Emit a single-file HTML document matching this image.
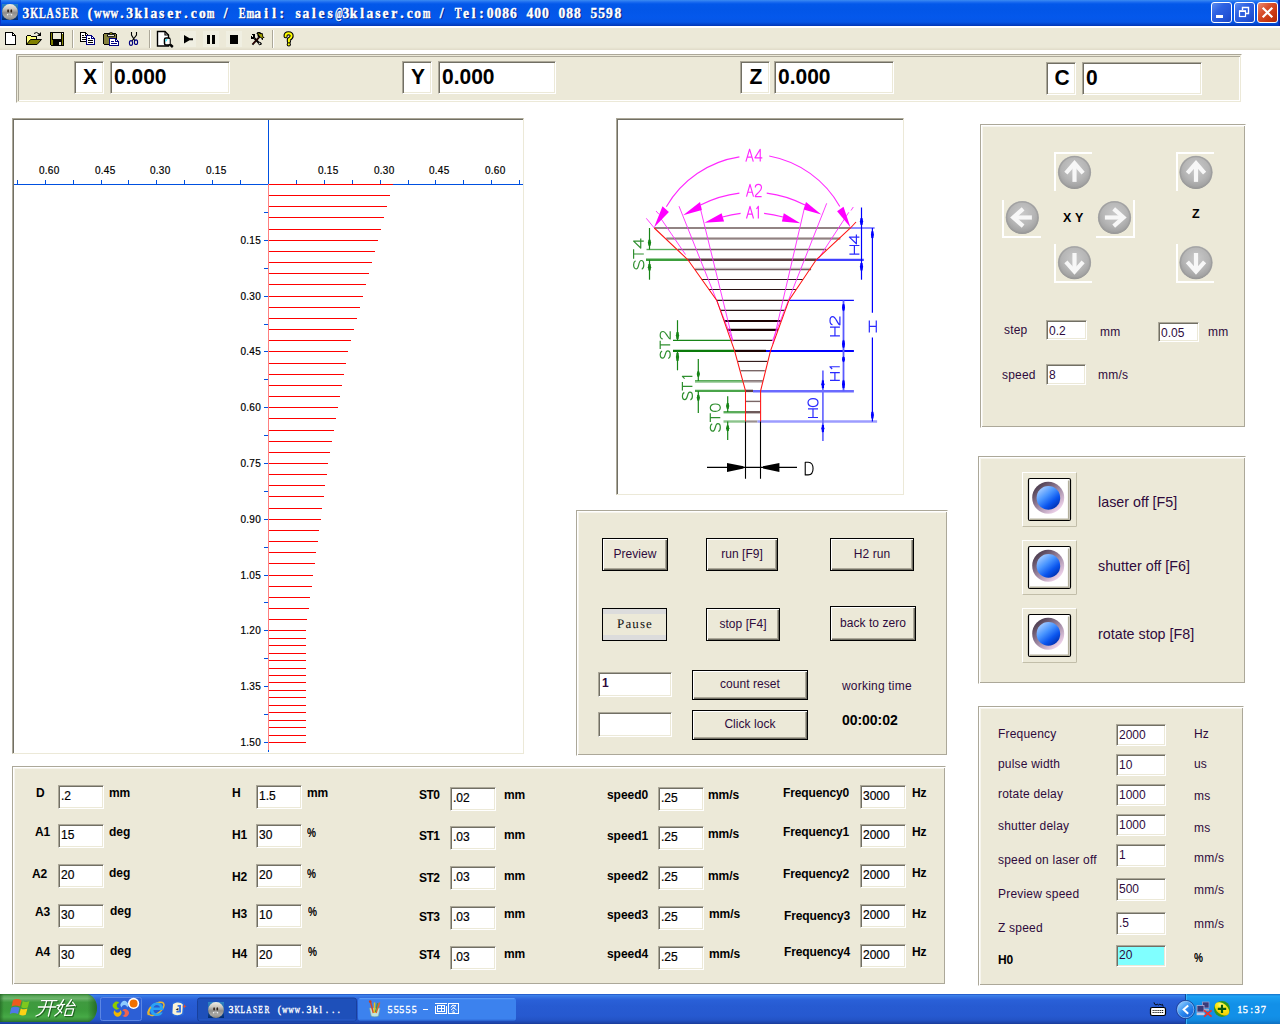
<!DOCTYPE html><html><head><meta charset="utf-8"><title>3KLASER</title><style>
*{margin:0;padding:0;box-sizing:border-box}
html,body{width:1280px;height:1024px;overflow:hidden;background:#fff}
body{position:relative;font-family:"Liberation Sans",sans-serif;font-size:12px;color:#000}
.a{position:absolute}
.t{position:absolute;white-space:nowrap;line-height:14px;height:14px;letter-spacing:0.2px;color:#2e0a3c}
.t.b{letter-spacing:-0.05px;color:#000}
.t.cl{color:#000}
.b{font-weight:bold}
.sunk{position:absolute;background:#fff;border:1px solid;border-color:#aca899 #fff #fff #aca899;box-shadow:inset 1px 1px 0 #716f64,inset -1px -1px 0 #ece9d8}
.sunk span{position:absolute;left:2px;top:3px;line-height:14px;white-space:nowrap;color:#2e0a3c}
.sunk span.k{color:#000;-webkit-text-stroke:0.2px #000}
.panel{position:absolute;background:#ece9d8;border:1px solid;border-color:#aca899 #fff #fff #aca899;box-shadow:inset 1px 1px 0 #fff,inset -1px -1px 0 #aca899,inset 2px 2px 0 #f7f5ee}
.btn{position:absolute;background:#ece9d8;border:1px solid #000;box-shadow:inset 1px 1px 0 #fff,inset -1px -1px 0 #716f64,inset -2px -2px 0 #aca899;text-align:center;white-space:nowrap;letter-spacing:0.05px;color:#2e0a3c}
svg{position:absolute;overflow:visible}
.mono{position:absolute;white-space:pre;color:#fff;font-family:'Liberation Serif',serif;transform:scaleX(0.78);transform-origin:0 50%;-webkit-text-stroke:0.35px #fff}
.mono i{display:inline-block;width:var(--cw);text-align:center;font-style:normal;transform:scaleX(1.2)}
.mono i.w{transform:scaleX(0.93)}
.mono i.m{transform:scaleX(0.82)}
.mono i.at{transform:scaleX(0.74)}
.mono i.u{transform:scaleX(0.9)}
.cl{font-size:10px;letter-spacing:0.25px;color:#000;-webkit-text-stroke:0.2px #000}
</style></head><body>
<div class="a" style="left:0;top:0;width:1280px;height:26px;background:linear-gradient(to bottom,#3b8bf2 0px,#1c6cf0 2px,#0358ea 4px,#0256e8 9px,#0458ec 17px,#0556e6 22px,#0347cf 24px,#0236b4 26px)"></div>
<div class="a" style="left:0;top:0;width:1px;height:26px;background:#0a34c6"></div><div class="a" style="left:1278px;top:0;width:2px;height:26px;background:linear-gradient(to right,#0a3cc8,#001e9c)"></div>
<svg style="left:2px;top:4px" width="16" height="16" viewBox="0 0 16 16"><defs><linearGradient id="gi" x1="0" y1="0" x2="0" y2="1"><stop offset="0" stop-color="#f2ede4"/><stop offset="0.28" stop-color="#cfcac2"/><stop offset="0.55" stop-color="#8f8d8a"/><stop offset="0.8" stop-color="#a9a7a3"/><stop offset="1" stop-color="#8a857d"/></linearGradient><linearGradient id="gib" x1="0" y1="0" x2="0" y2="1"><stop offset="0" stop-color="#2e86c4"/><stop offset="0.5" stop-color="#1a5aa8"/><stop offset="1" stop-color="#002a70"/></linearGradient></defs><rect width="16" height="16" fill="url(#gib)"/><circle cx="8" cy="8" r="7.9" fill="url(#gi)"/><ellipse cx="6.1" cy="6.9" rx="0.9" ry="1.6" fill="#33241c"/><ellipse cx="9.3" cy="6.9" rx="0.9" ry="1.6" fill="#33241c"/><rect x="4.9" y="9.9" width="1.3" height="1.5" fill="#eee"/><rect x="8.9" y="9.9" width="1.3" height="1.5" fill="#eee"/><rect x="6.2" y="9.6" width="2.7" height="1" fill="#c8c8c8"/></svg>
<div class="mono b" style="left:22px;top:4px;font-size:14.5px;height:18px;line-height:18px;--cw:10.256px;text-shadow:1.4px 1px 0 #0a2a8c;-webkit-text-stroke:0.4px #fff"><i>3</i><i class="u">K</i><i class="u">L</i><i class="u">A</i><i class="u">S</i><i class="u">E</i><i class="u">R</i><i> </i><i>(</i><i class="w">w</i><i class="w">w</i><i class="w">w</i><i>.</i><i>3</i><i>k</i><i>l</i><i>a</i><i>s</i><i>e</i><i>r</i><i>.</i><i>c</i><i>o</i><i class="m">m</i><i> </i><i>/</i><i> </i><i class="u">E</i><i class="m">m</i><i>a</i><i>i</i><i>l</i><i>:</i><i> </i><i>s</i><i>a</i><i>l</i><i>e</i><i>s</i><i class="at">@</i><i>3</i><i>k</i><i>l</i><i>a</i><i>s</i><i>e</i><i>r</i><i>.</i><i>c</i><i>o</i><i class="m">m</i><i> </i><i>/</i><i> </i><i class="u">T</i><i>e</i><i>l</i><i>:</i><i>0</i><i>0</i><i>8</i><i>6</i><i> </i><i>4</i><i>0</i><i>0</i><i> </i><i>0</i><i>8</i><i>8</i><i> </i><i>5</i><i>5</i><i>9</i><i>8</i></div>
<div class="a" style="left:1211px;top:2px;width:21px;height:21px;border:1px solid #fff;border-radius:3px;background:linear-gradient(135deg,#5d8df0 0%,#2f63e3 35%,#2455d8 70%,#1a45c4 100%)"></div>
<div class="a" style="left:1234px;top:2px;width:21px;height:21px;border:1px solid #fff;border-radius:3px;background:linear-gradient(135deg,#5d8df0 0%,#2f63e3 35%,#2455d8 70%,#1a45c4 100%)"></div>
<div class="a" style="left:1257px;top:2px;width:21px;height:21px;border:1px solid #fff;border-radius:3px;background:linear-gradient(135deg,#eb8b73 0%,#d9512f 35%,#c8370f 70%,#b02a08 100%)"></div>
<div class="a" style="left:1216px;top:15px;width:7px;height:3px;background:#fff"></div>
<svg style="left:1234px;top:2px" width="21" height="21"><path d="M8.5 8 V5.5 H14.5 V11.5 H12" fill="none" stroke="#fff" stroke-width="1.4"/><rect x="5.5" y="9" width="6" height="5.5" fill="none" stroke="#fff" stroke-width="1.2"/><rect x="5" y="8.4" width="7" height="1.6" fill="#fff"/></svg>
<svg style="left:1257px;top:2px" width="21" height="21"><path d="M5.7 5.7 L15.3 15.3 M15.3 5.7 L5.7 15.3" stroke="#fff" stroke-width="2.2"/></svg>
<div class="a" style="left:0;top:28px;width:1280px;height:22px;background:linear-gradient(to bottom,#ece9d8 0,#ece9d8 19px,#e0dbc8 22px)"></div>
<div class="a" style="left:72px;top:30px;width:1px;height:18px;background:#aca899"></div><div class="a" style="left:73px;top:30px;width:1px;height:18px;background:#fff"></div>
<div class="a" style="left:149px;top:30px;width:1px;height:18px;background:#aca899"></div><div class="a" style="left:150px;top:30px;width:1px;height:18px;background:#fff"></div>
<div class="a" style="left:272px;top:30px;width:1px;height:18px;background:#aca899"></div><div class="a" style="left:273px;top:30px;width:1px;height:18px;background:#fff"></div>
<svg style="left:0;top:0" width="320" height="52" viewBox="0 0 320 52"><path d="M5.5 32.5 H12.5 L15.5 35.5 V44.5 H5.5 Z" fill="#fff" stroke="#000" shape-rendering="crispEdges"/><path d="M12.5 32.5 V35.5 H15.5" fill="none" stroke="#000" shape-rendering="crispEdges"/><path d="M26.5 44 V36.5 L27.5 35.5 H30.5 L31.5 36.5 H36.5 V39" fill="#ffff7a" stroke="#000" shape-rendering="crispEdges"/><path d="M26.5 44.5 L30.5 39.5 H41.5 L37 44.5 Z" fill="#808000" stroke="#000"/><rect x="26" y="37" width="1" height="8" fill="#000" shape-rendering="crispEdges"/><path d="M34 33.5 Q36.5 31 39.5 34.3" fill="none" stroke="#000" stroke-width="1"/><path d="M41 32 V36 H37 Z" fill="#000"/><path d="M50.5 32.5 H63.5 V45.5 H51.5 L50.5 44.5 Z" fill="#808000" stroke="#000" shape-rendering="crispEdges"/><rect x="53" y="33" width="8" height="6" fill="#ece9d8" shape-rendering="crispEdges"/><rect x="52" y="39" width="10" height="1" fill="#000" shape-rendering="crispEdges"/><rect x="52" y="33" width="1" height="7" fill="#000" shape-rendering="crispEdges"/><rect x="61" y="33" width="1" height="7" fill="#000" shape-rendering="crispEdges"/><rect x="53" y="40" width="9" height="5" fill="#000" shape-rendering="crispEdges"/><rect x="59" y="42" width="2" height="3" fill="#ece9d8" shape-rendering="crispEdges"/><rect x="62" y="33" width="1" height="1" fill="#fff" shape-rendering="crispEdges"/><path d="M80.5 32.5 H85.5 L88.5 35.5 V41.5 H80.5 Z" fill="#fff" stroke="#000" shape-rendering="crispEdges"/><path d="M85.5 32.5 V35.5 H88.5" fill="none" stroke="#000" shape-rendering="crispEdges"/><path d="M82 35.5 H84 M82 37.5 H86 M82 39.5 H86" stroke="#000" shape-rendering="crispEdges"/><path d="M86.5 35.5 H91.5 L94.5 38.5 V44.5 H86.5 Z" fill="#fff" stroke="#000080" shape-rendering="crispEdges"/><path d="M91.5 35.5 V38.5 H94.5" fill="none" stroke="#000080" shape-rendering="crispEdges"/><path d="M88 38.5 H90 M88 40.5 H93 M88 42.5 H93" stroke="#000" shape-rendering="crispEdges"/><path d="M104.5 33.5 H115.5 L116.5 34.5 V43.5 L115.5 44.5 H104.5 L103.5 43.5 V34.5 Z" fill="#85813d" stroke="#000" shape-rendering="crispEdges"/><path d="M108.4 34.2 L109.8 32.3 H112.2 L113.6 34.2 Z" fill="#000"/><path d="M109.5 34.3 L111 32.9 L112.5 34.3 Z" fill="#ffff00"/><rect x="107.5" y="34.3" width="7" height="2.4" rx="0.6" fill="#ece9d8" stroke="#000" stroke-width="1"/><path d="M109.5 38.5 H115.5 L118.5 41.5 V45.5 H109.5 Z" fill="#fff" stroke="#000080" shape-rendering="crispEdges"/><path d="M115.5 38.5 V41.5 H118.5" fill="none" stroke="#000080" shape-rendering="crispEdges"/><path d="M111 41.5 H114 M111 43.5 H117" stroke="#000080" shape-rendering="crispEdges"/><path d="M131.5 32 V35 L135 41 M136.5 32 V35 L132 41" fill="none" stroke="#000" stroke-width="1.1"/><ellipse cx="131" cy="43" rx="1.6" ry="2.4" fill="none" stroke="#000080" stroke-width="1.1"/><ellipse cx="136" cy="42.2" rx="1.6" ry="2.3" fill="none" stroke="#000080" stroke-width="1.1"/><path d="M157.5 31.5 H165 L168.5 35 V46 H157.5 Z" fill="#fff" stroke="#000" stroke-width="1.4"/><path d="M165 31.5 V35 H168.5" fill="none" stroke="#000" stroke-width="1.2"/><rect x="164.5" y="38" width="5.5" height="7" rx="1.5" fill="#fff" stroke="#000" stroke-width="1.5"/><path d="M165.6 39.2 H167.6 L165.6 42.2 Z" fill="#00e1ff"/><rect x="168.6" y="39" width="1" height="5" fill="#fff"/><path d="M170 44.5 L172.8 47" stroke="#000" stroke-width="2.4"/><rect x="180" y="31" width="16" height="16" fill="#f0efe2" shape-rendering="crispEdges"/><rect x="203" y="31" width="16" height="16" fill="#f0efe2" shape-rendering="crispEdges"/><rect x="226" y="31" width="16" height="16" fill="#f0efe2" shape-rendering="crispEdges"/><path d="M184 35 L184 43.4 L189.5 40.2 H193 V38.2 H189.5 Z" fill="#000"/><rect x="207" y="35" width="3" height="9" fill="#000" shape-rendering="crispEdges"/><rect x="212" y="35" width="3" height="9" fill="#000" shape-rendering="crispEdges"/><rect x="230" y="35" width="8" height="9" fill="#000" shape-rendering="crispEdges"/><rect x="252" y="34" width="1" height="1" fill="#000" shape-rendering="crispEdges"/><rect x="253" y="34" width="1" height="1" fill="#000" shape-rendering="crispEdges"/><rect x="254" y="34" width="1" height="1" fill="#000" shape-rendering="crispEdges"/><rect x="253" y="35" width="1" height="1" fill="#000" shape-rendering="crispEdges"/><rect x="254" y="35" width="1" height="1" fill="#000" shape-rendering="crispEdges"/><rect x="251" y="36" width="1" height="1" fill="#000" shape-rendering="crispEdges"/><rect x="253" y="36" width="1" height="1" fill="#000" shape-rendering="crispEdges"/><rect x="254" y="36" width="1" height="1" fill="#000" shape-rendering="crispEdges"/><rect x="251" y="37" width="1" height="1" fill="#000" shape-rendering="crispEdges"/><rect x="252" y="37" width="1" height="1" fill="#000" shape-rendering="crispEdges"/><rect x="253" y="37" width="1" height="1" fill="#000" shape-rendering="crispEdges"/><rect x="254" y="37" width="1" height="1" fill="#000" shape-rendering="crispEdges"/><rect x="251" y="38" width="1" height="1" fill="#000" shape-rendering="crispEdges"/><rect x="252" y="38" width="1" height="1" fill="#000" shape-rendering="crispEdges"/><rect x="253" y="38" width="1" height="1" fill="#000" shape-rendering="crispEdges"/><path d="M254.4 38.2 L259 43" stroke="#000" stroke-width="2.1"/><circle cx="259.8" cy="43.5" r="1.25" fill="#ddd" stroke="#000" stroke-width="1"/><path d="M260.6 44.9 L261.2 43.2" stroke="#000" stroke-width="1.2"/><path d="M258.8 37.6 L252.4 44.6" stroke="#000" stroke-width="1.9"/><path d="M258.9 37.3 L252.8 44" stroke="#b00000" stroke-width="0.8" stroke-dasharray="0.8 0.8"/><path d="M256.3 33.5 L257.6 32.1 L260.3 32 L260.8 33 L262.7 33.2 L263.3 36.7 L264.5 37.2 L264.1 38.1 L263 37.9 L263 39.7 L262 39.9 L261 37.7 L258.9 37.9 L257.6 36.3 L257.3 34.3 Z" fill="#000"/><path d="M258.1 33.4 L259 32.9 L259.7 34 L262.1 34.2 L262.5 37 L263.3 37.6 L262.4 38 L260.5 36.9 L259.3 35.4 Z" fill="#a19f00"/><path d="M285.6 36.2 Q285.4 33.3 288.5 33.3 Q291.7 33.3 291.6 36 Q291.6 37.8 288.9 39.4 V41.4" fill="none" stroke="#000" stroke-width="4.2" stroke-linecap="round"/><circle cx="288.8" cy="44.4" r="2.1" fill="#000"/><path d="M285.6 36.2 Q285.4 33.3 288.5 33.3 Q291.7 33.3 291.6 36 Q291.6 37.8 288.9 39.4 V41.4" fill="none" stroke="#ffff00" stroke-width="2" stroke-linecap="round"/><circle cx="288.8" cy="44.4" r="1.1" fill="#ffff00"/></svg>
<div class="a" style="left:16px;top:54px;width:1226px;height:49px;background:#ece9d8;border:1px solid;border-color:#aca899 #fff #fff #aca899;box-shadow:inset 0 0 0 1px #ece9d8, inset 2px 2px 0 #aca899, inset -2px -2px 0 #fff"></div>
<div class="sunk" style="left:74px;top:61px;width:30px;height:33px"></div>
<div class="a b" style="left:75px;top:60px;width:30px;height:33px;line-height:31px;text-align:center;font-size:21px;transform:scaleY(1.08)">X</div>
<div class="sunk" style="left:110px;top:61px;width:120px;height:33px"></div>
<div class="a b" style="left:114px;top:60px;height:33px;line-height:31px;font-size:21px;transform:scaleY(1.08);transform-origin:0 50%">0.000</div>
<div class="sunk" style="left:402px;top:61px;width:30px;height:33px"></div>
<div class="a b" style="left:403px;top:60px;width:30px;height:33px;line-height:31px;text-align:center;font-size:21px;transform:scaleY(1.08)">Y</div>
<div class="sunk" style="left:438px;top:61px;width:118px;height:33px"></div>
<div class="a b" style="left:442px;top:60px;height:33px;line-height:31px;font-size:21px;transform:scaleY(1.08);transform-origin:0 50%">0.000</div>
<div class="sunk" style="left:740px;top:61px;width:30px;height:33px"></div>
<div class="a b" style="left:741px;top:60px;width:30px;height:33px;line-height:31px;text-align:center;font-size:21px;transform:scaleY(1.08)">Z</div>
<div class="sunk" style="left:774px;top:61px;width:120px;height:33px"></div>
<div class="a b" style="left:778px;top:60px;height:33px;line-height:31px;font-size:21px;transform:scaleY(1.08);transform-origin:0 50%">0.000</div>
<div class="sunk" style="left:1046px;top:62px;width:30px;height:33px"></div>
<div class="a b" style="left:1047px;top:61px;width:30px;height:33px;line-height:31px;text-align:center;font-size:21px;transform:scaleY(1.08)">C</div>
<div class="sunk" style="left:1082px;top:62px;width:120px;height:33px"></div>
<div class="a b" style="left:1086px;top:61px;height:33px;line-height:31px;font-size:21px;transform:scaleY(1.08);transform-origin:0 50%">0</div>
<div class="a" style="left:12px;top:118px;width:512px;height:636px;background:#fff;border:1px solid;border-color:#aca899 #ece9d8 #ece9d8 #aca899;box-shadow:inset 1px 1px 0 #716f64"></div>
<svg style="left:0;top:0" width="540" height="760" viewBox="0 0 540 760"><rect x="14" y="184" width="509" height="1" fill="#0050e0" shape-rendering="crispEdges"/><rect x="268" y="120" width="1" height="64" fill="#0050e0" shape-rendering="crispEdges"/><rect x="268" y="184" width="1" height="567" fill="#ff8080" shape-rendering="crispEdges"/><rect x="268" y="750" width="1" height="2" fill="#0050e0" shape-rendering="crispEdges"/><rect x="17" y="180" width="1" height="4" fill="#0050e0" shape-rendering="crispEdges"/><rect x="45" y="180" width="1" height="4" fill="#0050e0" shape-rendering="crispEdges"/><rect x="73" y="180" width="1" height="4" fill="#0050e0" shape-rendering="crispEdges"/><rect x="101" y="180" width="1" height="4" fill="#0050e0" shape-rendering="crispEdges"/><rect x="128" y="180" width="1" height="4" fill="#0050e0" shape-rendering="crispEdges"/><rect x="156" y="180" width="1" height="4" fill="#0050e0" shape-rendering="crispEdges"/><rect x="184" y="180" width="1" height="4" fill="#0050e0" shape-rendering="crispEdges"/><rect x="212" y="180" width="1" height="4" fill="#0050e0" shape-rendering="crispEdges"/><rect x="240" y="180" width="1" height="4" fill="#0050e0" shape-rendering="crispEdges"/><rect x="296" y="180" width="1" height="4" fill="#0050e0" shape-rendering="crispEdges"/><rect x="324" y="180" width="1" height="4" fill="#0050e0" shape-rendering="crispEdges"/><rect x="352" y="180" width="1" height="4" fill="#0050e0" shape-rendering="crispEdges"/><rect x="380" y="180" width="1" height="4" fill="#0050e0" shape-rendering="crispEdges"/><rect x="408" y="180" width="1" height="4" fill="#0050e0" shape-rendering="crispEdges"/><rect x="435" y="180" width="1" height="4" fill="#0050e0" shape-rendering="crispEdges"/><rect x="463" y="180" width="1" height="4" fill="#0050e0" shape-rendering="crispEdges"/><rect x="491" y="180" width="1" height="4" fill="#0050e0" shape-rendering="crispEdges"/><rect x="519" y="180" width="1" height="4" fill="#0050e0" shape-rendering="crispEdges"/><rect x="264" y="212" width="4" height="1" fill="#0050e0" shape-rendering="crispEdges"/><rect x="264" y="240" width="4" height="1" fill="#0050e0" shape-rendering="crispEdges"/><rect x="264" y="268" width="4" height="1" fill="#0050e0" shape-rendering="crispEdges"/><rect x="264" y="296" width="4" height="1" fill="#0050e0" shape-rendering="crispEdges"/><rect x="264" y="324" width="4" height="1" fill="#0050e0" shape-rendering="crispEdges"/><rect x="264" y="351" width="4" height="1" fill="#0050e0" shape-rendering="crispEdges"/><rect x="264" y="379" width="4" height="1" fill="#0050e0" shape-rendering="crispEdges"/><rect x="264" y="407" width="4" height="1" fill="#0050e0" shape-rendering="crispEdges"/><rect x="264" y="435" width="4" height="1" fill="#0050e0" shape-rendering="crispEdges"/><rect x="264" y="463" width="4" height="1" fill="#0050e0" shape-rendering="crispEdges"/><rect x="264" y="491" width="4" height="1" fill="#0050e0" shape-rendering="crispEdges"/><rect x="264" y="519" width="4" height="1" fill="#0050e0" shape-rendering="crispEdges"/><rect x="264" y="547" width="4" height="1" fill="#0050e0" shape-rendering="crispEdges"/><rect x="264" y="575" width="4" height="1" fill="#0050e0" shape-rendering="crispEdges"/><rect x="264" y="602" width="4" height="1" fill="#0050e0" shape-rendering="crispEdges"/><rect x="264" y="630" width="4" height="1" fill="#0050e0" shape-rendering="crispEdges"/><rect x="264" y="658" width="4" height="1" fill="#0050e0" shape-rendering="crispEdges"/><rect x="264" y="686" width="4" height="1" fill="#0050e0" shape-rendering="crispEdges"/><rect x="264" y="714" width="4" height="1" fill="#0050e0" shape-rendering="crispEdges"/><rect x="264" y="742" width="4" height="1" fill="#0050e0" shape-rendering="crispEdges"/><rect x="269" y="184" width="124" height="1" fill="#ff0000" shape-rendering="crispEdges"/><rect x="269" y="195" width="121" height="1" fill="#ff0000" shape-rendering="crispEdges"/><rect x="269" y="206" width="118" height="1" fill="#ff0000" shape-rendering="crispEdges"/><rect x="269" y="217" width="115" height="1" fill="#ff0000" shape-rendering="crispEdges"/><rect x="269" y="229" width="112" height="1" fill="#ff0000" shape-rendering="crispEdges"/><rect x="269" y="240" width="109" height="1" fill="#ff0000" shape-rendering="crispEdges"/><rect x="269" y="251" width="106" height="1" fill="#ff0000" shape-rendering="crispEdges"/><rect x="269" y="262" width="103" height="1" fill="#ff0000" shape-rendering="crispEdges"/><rect x="269" y="273" width="100" height="1" fill="#ff0000" shape-rendering="crispEdges"/><rect x="269" y="284" width="97" height="1" fill="#ff0000" shape-rendering="crispEdges"/><rect x="269" y="296" width="94" height="1" fill="#ff0000" shape-rendering="crispEdges"/><rect x="269" y="307" width="91" height="1" fill="#ff0000" shape-rendering="crispEdges"/><rect x="269" y="318" width="88" height="1" fill="#ff0000" shape-rendering="crispEdges"/><rect x="269" y="329" width="85" height="1" fill="#ff0000" shape-rendering="crispEdges"/><rect x="269" y="340" width="82" height="1" fill="#ff0000" shape-rendering="crispEdges"/><rect x="269" y="351" width="79" height="1" fill="#ff0000" shape-rendering="crispEdges"/><rect x="269" y="363" width="77" height="1" fill="#ff0000" shape-rendering="crispEdges"/><rect x="269" y="374" width="75" height="1" fill="#ff0000" shape-rendering="crispEdges"/><rect x="269" y="385" width="73" height="1" fill="#ff0000" shape-rendering="crispEdges"/><rect x="269" y="396" width="71" height="1" fill="#ff0000" shape-rendering="crispEdges"/><rect x="269" y="407" width="69" height="1" fill="#ff0000" shape-rendering="crispEdges"/><rect x="269" y="418" width="67" height="1" fill="#ff0000" shape-rendering="crispEdges"/><rect x="269" y="430" width="65" height="1" fill="#ff0000" shape-rendering="crispEdges"/><rect x="269" y="441" width="63" height="1" fill="#ff0000" shape-rendering="crispEdges"/><rect x="269" y="452" width="61" height="1" fill="#ff0000" shape-rendering="crispEdges"/><rect x="269" y="463" width="59" height="1" fill="#ff0000" shape-rendering="crispEdges"/><rect x="269" y="474" width="58" height="1" fill="#ff0000" shape-rendering="crispEdges"/><rect x="269" y="485" width="56" height="1" fill="#ff0000" shape-rendering="crispEdges"/><rect x="269" y="496" width="55" height="1" fill="#ff0000" shape-rendering="crispEdges"/><rect x="269" y="508" width="53" height="1" fill="#ff0000" shape-rendering="crispEdges"/><rect x="269" y="519" width="52" height="1" fill="#ff0000" shape-rendering="crispEdges"/><rect x="269" y="530" width="50" height="1" fill="#ff0000" shape-rendering="crispEdges"/><rect x="269" y="541" width="49" height="1" fill="#ff0000" shape-rendering="crispEdges"/><rect x="269" y="552" width="47" height="1" fill="#ff0000" shape-rendering="crispEdges"/><rect x="269" y="563" width="46" height="1" fill="#ff0000" shape-rendering="crispEdges"/><rect x="269" y="575" width="44" height="1" fill="#ff0000" shape-rendering="crispEdges"/><rect x="269" y="586" width="43" height="1" fill="#ff0000" shape-rendering="crispEdges"/><rect x="269" y="597" width="41" height="1" fill="#ff0000" shape-rendering="crispEdges"/><rect x="269" y="608" width="40" height="1" fill="#ff0000" shape-rendering="crispEdges"/><rect x="269" y="619" width="38" height="1" fill="#ff0000" shape-rendering="crispEdges"/><rect x="269" y="630" width="37" height="1" fill="#ff0000" shape-rendering="crispEdges"/><rect x="269" y="638" width="37" height="1" fill="#ff0000" shape-rendering="crispEdges"/><rect x="269" y="645" width="37" height="1" fill="#ff0000" shape-rendering="crispEdges"/><rect x="269" y="653" width="37" height="1" fill="#ff0000" shape-rendering="crispEdges"/><rect x="269" y="660" width="37" height="1" fill="#ff0000" shape-rendering="crispEdges"/><rect x="269" y="668" width="37" height="1" fill="#ff0000" shape-rendering="crispEdges"/><rect x="269" y="675" width="37" height="1" fill="#ff0000" shape-rendering="crispEdges"/><rect x="269" y="682" width="37" height="1" fill="#ff0000" shape-rendering="crispEdges"/><rect x="269" y="690" width="37" height="1" fill="#ff0000" shape-rendering="crispEdges"/><rect x="269" y="697" width="37" height="1" fill="#ff0000" shape-rendering="crispEdges"/><rect x="269" y="705" width="37" height="1" fill="#ff0000" shape-rendering="crispEdges"/><rect x="269" y="712" width="37" height="1" fill="#ff0000" shape-rendering="crispEdges"/><rect x="269" y="720" width="37" height="1" fill="#ff0000" shape-rendering="crispEdges"/><rect x="269" y="727" width="37" height="1" fill="#ff0000" shape-rendering="crispEdges"/><rect x="269" y="735" width="37" height="1" fill="#ff0000" shape-rendering="crispEdges"/><rect x="269" y="742" width="37" height="1" fill="#ff0000" shape-rendering="crispEdges"/></svg>
<div class="t cl" style="left:206px;top:164px">0.15</div>
<div class="t cl" style="left:318px;top:164px">0.15</div>
<div class="t cl" style="left:150px;top:164px">0.30</div>
<div class="t cl" style="left:374px;top:164px">0.30</div>
<div class="t cl" style="left:95px;top:164px">0.45</div>
<div class="t cl" style="left:429px;top:164px">0.45</div>
<div class="t cl" style="left:39px;top:164px">0.60</div>
<div class="t cl" style="left:485px;top:164px">0.60</div>
<div class="t cl" style="left:240px;top:234px;width:21px;text-align:right">0.15</div>
<div class="t cl" style="left:240px;top:290px;width:21px;text-align:right">0.30</div>
<div class="t cl" style="left:240px;top:345px;width:21px;text-align:right">0.45</div>
<div class="t cl" style="left:240px;top:401px;width:21px;text-align:right">0.60</div>
<div class="t cl" style="left:240px;top:457px;width:21px;text-align:right">0.75</div>
<div class="t cl" style="left:240px;top:513px;width:21px;text-align:right">0.90</div>
<div class="t cl" style="left:240px;top:569px;width:21px;text-align:right">1.05</div>
<div class="t cl" style="left:240px;top:624px;width:21px;text-align:right">1.20</div>
<div class="t cl" style="left:240px;top:680px;width:21px;text-align:right">1.35</div>
<div class="t cl" style="left:240px;top:736px;width:21px;text-align:right">1.50</div>
<div class="a" style="left:616px;top:118px;width:288px;height:377px;background:#fff;border:1px solid;border-color:#aca899 #ece9d8 #ece9d8 #aca899;box-shadow:inset 1px 1px 0 #716f64"></div>
<svg style="left:0;top:0" width="920" height="500" viewBox="0 0 920 500"><line x1="654.3" y1="228.0" x2="850.5" y2="228.0" stroke="#6e5a5a" stroke-width="1.5"/><line x1="666.3" y1="237.7" x2="840.3" y2="237.7" stroke="#c4baba" stroke-width="1.3"/><line x1="666.3" y1="238.9" x2="840.3" y2="238.9" stroke="#705c5c" stroke-width="1.3"/><line x1="677.8" y1="249.5" x2="826.3" y2="249.5" stroke="#6e5a5a" stroke-width="1.5"/><line x1="687.9" y1="259.8" x2="816.2" y2="259.8" stroke="#5a4040" stroke-width="2.4"/><line x1="694.9" y1="268.5" x2="811.1" y2="268.5" stroke="#c4baba" stroke-width="1.3"/><line x1="694.9" y1="269.7" x2="811.1" y2="269.7" stroke="#705c5c" stroke-width="1.3"/><line x1="701.5" y1="279.5" x2="802.9" y2="279.5" stroke="#2a1414" stroke-width="1.1"/><line x1="708.9" y1="289.5" x2="795.9" y2="289.5" stroke="#2a1414" stroke-width="1.1"/><line x1="716.8" y1="300.4" x2="788.9" y2="300.4" stroke="#2a1414" stroke-width="1.1"/><line x1="720.0" y1="310.4" x2="784.7" y2="310.4" stroke="#2a1414" stroke-width="1.1"/><line x1="724.1" y1="321.0" x2="780.9" y2="321.0" stroke="#1c0404" stroke-width="2.2"/><line x1="727.3" y1="329.9" x2="777.8" y2="329.9" stroke="#1c0404" stroke-width="2.2"/><line x1="731.7" y1="340.4" x2="772.6" y2="340.4" stroke="#2a1414" stroke-width="1.1"/><line x1="734.6" y1="350.9" x2="766.0" y2="350.9" stroke="#1c0404" stroke-width="2.2"/><line x1="738.1" y1="361.4" x2="767.3" y2="361.4" stroke="#2a1414" stroke-width="1.1"/><line x1="740.6" y1="370.7" x2="764.8" y2="370.7" stroke="#7a6666" stroke-width="1.4"/><line x1="743.2" y1="382.0" x2="762.9" y2="382.0" stroke="#b8aeae" stroke-width="1.4"/><line x1="743.2" y1="380.8" x2="762.9" y2="380.8" stroke="#7a6868" stroke-width="1.4"/><line x1="745.5" y1="390.9" x2="753.0" y2="390.9" stroke="#5a4040" stroke-width="2.4"/><line x1="745.5" y1="401.4" x2="760.5" y2="401.4" stroke="#7a6666" stroke-width="1.4"/><line x1="745.5" y1="412.2" x2="760.5" y2="412.2" stroke="#6e5a5a" stroke-width="2.4"/><line x1="745.5" y1="421.5" x2="757.5" y2="421.5" stroke="#9a9090" stroke-width="2.2"/><line x1="850" y1="228" x2="874.6" y2="228" stroke="#5a5aff" stroke-width="1.4"/><line x1="816" y1="259.8" x2="863.8" y2="259.8" stroke="#4040ff" stroke-width="2.2"/><line x1="788.9" y1="300.4" x2="853.9" y2="300.4" stroke="#0a0aff" stroke-width="1.1"/><line x1="766" y1="351" x2="853.9" y2="351" stroke="#0000ff" stroke-width="2.2"/><line x1="753" y1="391.2" x2="853.9" y2="391.2" stroke="#6a6aff" stroke-width="2.4"/><line x1="757.5" y1="421.5" x2="877.1" y2="421.5" stroke="#9c9cff" stroke-width="2.4"/><line x1="646.5" y1="249.5" x2="677.5" y2="249.5" stroke="#58ac58" stroke-width="1.4"/><line x1="646" y1="259.8" x2="688" y2="259.8" stroke="#3c9e3c" stroke-width="2.4"/><line x1="673" y1="340.4" x2="732" y2="340.4" stroke="#178517" stroke-width="1.1"/><line x1="673" y1="350.9" x2="734.6" y2="350.9" stroke="#0a7a0a" stroke-width="2.2"/><line x1="695" y1="381.4" x2="743.2" y2="381.4" stroke="#8cc48c" stroke-width="2.6"/><line x1="695" y1="380.6" x2="743.2" y2="380.6" stroke="#5aac5a" stroke-width="1.2"/><line x1="695" y1="390.9" x2="745.5" y2="390.9" stroke="#4aa44a" stroke-width="2.4"/><line x1="723.5" y1="412.2" x2="745.5" y2="412.2" stroke="#5aac5a" stroke-width="2.4"/><line x1="723.5" y1="421.5" x2="745.5" y2="421.5" stroke="#8cc48c" stroke-width="2.4"/><line x1="646.3" y1="218.3" x2="654.3" y2="228.0" stroke="#ff28ff" stroke-width="0.9"/><line x1="656.0" y1="211.0" x2="659.0" y2="214.3" stroke="#ff28ff" stroke-width="0.9"/><line x1="659.5" y1="216.5" x2="685.5" y2="254.6" stroke="#ff28ff" stroke-width="0.9"/><line x1="848.8" y1="212.3" x2="818.7" y2="258.3" stroke="#ff28ff" stroke-width="0.9"/><line x1="853.3" y1="207.0" x2="851.0" y2="210.5" stroke="#ff28ff" stroke-width="0.9"/><line x1="679.0" y1="206.2" x2="732.6" y2="340.4" stroke="#ff28ff" stroke-width="0.9"/><line x1="826.7" y1="203.3" x2="772.4" y2="341.0" stroke="#ff28ff" stroke-width="0.9"/><line x1="700.6" y1="209.4" x2="733.0" y2="341.5" stroke="#ff28ff" stroke-width="0.9"/><line x1="804.1" y1="209.4" x2="772.8" y2="344.0" stroke="#ff28ff" stroke-width="0.9"/><polyline points="654.3,228 687.9,259.8 716.8,300.4 734.6,350.9 745.5,390.9 745.5,421.5" fill="none" stroke="#ff1414" stroke-width="1.05"/><polyline points="856,222 850.5,228 816.2,259.8 788.9,300.4 770.5,350.9 760.6,390.9 760.6,421.5" fill="none" stroke="#ff1414" stroke-width="1.05"/><path d="M745.5,421.5 V478.8 M760.5,421.5 V478.8 M707,467.4 H797" stroke="#000" stroke-width="1.1" fill="none"/><path d="M727,463 V472 L743.5,468.5 V466.3 Z M779.4,463 V472 L763,468.5 V466.3 Z" fill="#000"/><path d="M0.5,0 V10 H4 C7.8,10 9.6,8 9.6,5 C9.6,2 7.8,0 4,0 Z" transform="translate(804.80,462.30) scale(0.860,1.260)" fill="none" stroke="#000" stroke-width="1.10" vector-effect="non-scaling-stroke" stroke-linejoin="round"/><path d="M739.4,156.9 A102.5,102.5 0 0 0 666.3,206.8" fill="none" stroke="#ff28ff" stroke-width="1.1"/><path d="M769.2,156 A102.5,102.5 0 0 1 839.8,206.5" fill="none" stroke="#ff28ff" stroke-width="1.1"/><path d="M739.4,193.1 A116,116 0 0 0 700.5,205" fill="none" stroke="#ff28ff" stroke-width="1.1"/><path d="M766.7,193.1 A116,116 0 0 1 805,205" fill="none" stroke="#ff28ff" stroke-width="1.1"/><path d="M740.6,213.4 A118,118 0 0 0 722.5,217" fill="none" stroke="#ff28ff" stroke-width="1.1"/><path d="M764.1,213.4 A118,118 0 0 1 783,217" fill="none" stroke="#ff28ff" stroke-width="1.1"/><path d="M654.0,227.5 L662.5,206.2 L668.9,211.9 Z" fill="#ff00ff"/><path d="M850.5,227.5 L837.1,211.3 L843.5,206.8 Z" fill="#ff00ff"/><path d="M683.1,215.3 L700.0,202.1 L701.9,210.0 Z" fill="#ff00ff"/><path d="M821.3,214.4 L806.0,202.1 L803.5,209.4 Z" fill="#ff00ff"/><path d="M704.4,222.7 L721.6,213.2 L724.1,221.4 Z" fill="#ff00ff"/><path d="M800.3,223.3 L783.8,213.2 L781.9,221.4 Z" fill="#ff00ff"/><path d="M0,10 L5,0 L10,10 M1.9,6.4 H8.1" transform="translate(745.90,149.20) scale(0.740,1.240)" fill="none" stroke="#ff28ff" stroke-width="1.15" vector-effect="non-scaling-stroke" stroke-linejoin="round"/><path d="M7.2,10 V0 L0,7 H10" transform="translate(754.90,149.20) scale(0.740,1.240)" fill="none" stroke="#ff28ff" stroke-width="1.15" vector-effect="non-scaling-stroke" stroke-linejoin="round"/><path d="M0,10 L5,0 L10,10 M1.9,6.4 H8.1" transform="translate(746.50,184.40) scale(0.700,1.220)" fill="none" stroke="#ff28ff" stroke-width="1.15" vector-effect="non-scaling-stroke" stroke-linejoin="round"/><path d="M0.6,2.6 C0.6,1 2.3,0 5,0 C7.6,0 9.4,1 9.4,2.8 C9.4,4.6 7.2,5.6 4.5,7 C2.2,8.2 0.5,9 0.5,10 H9.6" transform="translate(754.90,184.40) scale(0.700,1.220)" fill="none" stroke="#ff28ff" stroke-width="1.15" vector-effect="non-scaling-stroke" stroke-linejoin="round"/><path d="M0,10 L5,0 L10,10 M1.9,6.4 H8.1" transform="translate(746.50,206.30) scale(0.700,1.220)" fill="none" stroke="#ff28ff" stroke-width="1.15" vector-effect="non-scaling-stroke" stroke-linejoin="round"/><path d="M2.5,2.2 L5.2,0 V10" transform="translate(754.70,206.30) scale(0.700,1.220)" fill="none" stroke="#ff28ff" stroke-width="1.15" vector-effect="non-scaling-stroke" stroke-linejoin="round"/><line x1="649.5" y1="228.0" x2="649.5" y2="249.5" stroke="#178517" stroke-width="1.2"/><line x1="649.5" y1="259.8" x2="649.5" y2="279.7" stroke="#178517" stroke-width="1.2"/><path d="M649.5,238.7 L651.2,242.7 L649.5,246.7 L647.8,242.7 Z" fill="#178517"/><line x1="649.5" y1="239.7" x2="649.5" y2="245.7" stroke="#178517" stroke-width="2.2"/><path d="M649.5,263.0 L651.2,267.2 L649.5,271.5 L647.8,267.2 Z" fill="#178517"/><line x1="649.5" y1="264.0" x2="649.5" y2="270.5" stroke="#178517" stroke-width="2.2"/><line x1="677.5" y1="320.2" x2="677.5" y2="340.4" stroke="#178517" stroke-width="1.2"/><line x1="677.5" y1="350.9" x2="677.5" y2="370.3" stroke="#178517" stroke-width="1.2"/><path d="M677.5,331.1 L679.2,335.6 L677.5,340.0 L675.8,335.6 Z" fill="#178517"/><line x1="677.5" y1="332.1" x2="677.5" y2="339.0" stroke="#178517" stroke-width="2.2"/><path d="M677.5,351.9 L679.2,356.9 L677.5,361.9 L675.8,356.9 Z" fill="#178517"/><line x1="677.5" y1="352.9" x2="677.5" y2="360.9" stroke="#178517" stroke-width="2.2"/><line x1="698.3" y1="358.9" x2="698.3" y2="381.0" stroke="#178517" stroke-width="1.2"/><line x1="698.3" y1="390.9" x2="698.3" y2="412.9" stroke="#178517" stroke-width="1.2"/><path d="M698.3,370.5 L700.0,374.0 L698.3,377.5 L696.6,374.0 Z" fill="#178517"/><line x1="698.3" y1="371.5" x2="698.3" y2="376.5" stroke="#178517" stroke-width="2.2"/><path d="M698.3,393.9 L700.0,397.7 L698.3,401.5 L696.6,397.7 Z" fill="#178517"/><line x1="698.3" y1="394.9" x2="698.3" y2="400.5" stroke="#178517" stroke-width="2.2"/><line x1="727.7" y1="396.3" x2="727.7" y2="412.0" stroke="#178517" stroke-width="1.2"/><line x1="727.7" y1="421.5" x2="727.7" y2="440.0" stroke="#178517" stroke-width="1.2"/><path d="M727.7,402.2 L729.4,405.9 L727.7,409.7 L726.0,405.9 Z" fill="#178517"/><line x1="727.7" y1="403.2" x2="727.7" y2="408.7" stroke="#178517" stroke-width="2.2"/><path d="M727.7,424.5 L729.4,428.2 L727.7,432.0 L726.0,428.2 Z" fill="#178517"/><line x1="727.7" y1="425.5" x2="727.7" y2="431.0" stroke="#178517" stroke-width="2.2"/><path d="M9.3,1.9 C8.6,0.7 7,0 5,0 C2.4,0 0.7,1 0.7,2.5 C0.7,4 2.6,4.5 5,5 C7.6,5.5 9.5,6 9.5,7.5 C9.5,9 7.6,10 5,10 C2.6,10 0.9,9.3 0.4,8" transform="matrix(0,-0.960,1.020,0,633.60,269.60)" fill="none" stroke="#2f8f2f" stroke-width="1.20" vector-effect="non-scaling-stroke" stroke-linejoin="round"/><path d="M0,0 H10 M5,0 V10" transform="matrix(0,-0.960,1.020,0,633.60,258.80)" fill="none" stroke="#2f8f2f" stroke-width="1.20" vector-effect="non-scaling-stroke" stroke-linejoin="round"/><path d="M7.2,10 V0 L0,7 H10" transform="matrix(0,-0.960,1.020,0,633.60,248.00)" fill="none" stroke="#2f8f2f" stroke-width="1.20" vector-effect="non-scaling-stroke" stroke-linejoin="round"/><path d="M9.3,1.9 C8.6,0.7 7,0 5,0 C2.4,0 0.7,1 0.7,2.5 C0.7,4 2.6,4.5 5,5 C7.6,5.5 9.5,6 9.5,7.5 C9.5,9 7.6,10 5,10 C2.6,10 0.9,9.3 0.4,8" transform="matrix(0,-0.840,1.000,0,660.20,358.80)" fill="none" stroke="#2f8f2f" stroke-width="1.20" vector-effect="non-scaling-stroke" stroke-linejoin="round"/><path d="M0,0 H10 M5,0 V10" transform="matrix(0,-0.840,1.000,0,660.20,349.10)" fill="none" stroke="#2f8f2f" stroke-width="1.20" vector-effect="non-scaling-stroke" stroke-linejoin="round"/><path d="M0.6,2.6 C0.6,1 2.3,0 5,0 C7.6,0 9.4,1 9.4,2.8 C9.4,4.6 7.2,5.6 4.5,7 C2.2,8.2 0.5,9 0.5,10 H9.6" transform="matrix(0,-0.840,1.000,0,660.20,339.40)" fill="none" stroke="#2f8f2f" stroke-width="1.20" vector-effect="non-scaling-stroke" stroke-linejoin="round"/><path d="M9.3,1.9 C8.6,0.7 7,0 5,0 C2.4,0 0.7,1 0.7,2.5 C0.7,4 2.6,4.5 5,5 C7.6,5.5 9.5,6 9.5,7.5 C9.5,9 7.6,10 5,10 C2.6,10 0.9,9.3 0.4,8" transform="matrix(0,-0.840,1.000,0,682.40,400.20)" fill="none" stroke="#2f8f2f" stroke-width="1.20" vector-effect="non-scaling-stroke" stroke-linejoin="round"/><path d="M0,0 H10 M5,0 V10" transform="matrix(0,-0.840,1.000,0,682.40,390.50)" fill="none" stroke="#2f8f2f" stroke-width="1.20" vector-effect="non-scaling-stroke" stroke-linejoin="round"/><path d="M2.5,2.2 L5.2,0 V10" transform="matrix(0,-0.840,1.000,0,682.40,380.80)" fill="none" stroke="#2f8f2f" stroke-width="1.20" vector-effect="non-scaling-stroke" stroke-linejoin="round"/><path d="M9.3,1.9 C8.6,0.7 7,0 5,0 C2.4,0 0.7,1 0.7,2.5 C0.7,4 2.6,4.5 5,5 C7.6,5.5 9.5,6 9.5,7.5 C9.5,9 7.6,10 5,10 C2.6,10 0.9,9.3 0.4,8" transform="matrix(0,-0.860,1.000,0,710.30,431.80)" fill="none" stroke="#2f8f2f" stroke-width="1.20" vector-effect="non-scaling-stroke" stroke-linejoin="round"/><path d="M0,0 H10 M5,0 V10" transform="matrix(0,-0.860,1.000,0,710.30,421.90)" fill="none" stroke="#2f8f2f" stroke-width="1.20" vector-effect="non-scaling-stroke" stroke-linejoin="round"/><path d="M5,0 C7.6,0 9.3,2 9.3,5 C9.3,8 7.6,10 5,10 C2.4,10 0.7,8 0.7,5 C0.7,2 2.4,0 5,0 Z" transform="matrix(0,-0.860,1.000,0,710.30,412.00)" fill="none" stroke="#2f8f2f" stroke-width="1.20" vector-effect="non-scaling-stroke" stroke-linejoin="round"/><line x1="861.5" y1="207.5" x2="861.5" y2="279.7" stroke="#0000ff" stroke-width="1.2"/><path d="M861.5,217.1 L863.2,221.5 L861.5,225.9 L859.8,221.5 Z" fill="#0000ff"/><line x1="861.5" y1="218.1" x2="861.5" y2="224.9" stroke="#0000ff" stroke-width="2.2"/><path d="M861.5,262.0 L863.2,266.8 L861.5,271.5 L859.8,266.8 Z" fill="#0000ff"/><line x1="861.5" y1="263.0" x2="861.5" y2="270.5" stroke="#0000ff" stroke-width="2.2"/><line x1="872.4" y1="228.0" x2="872.4" y2="312.7" stroke="#0000ff" stroke-width="1.2"/><line x1="872.4" y1="337.5" x2="872.4" y2="421.5" stroke="#0000ff" stroke-width="1.2"/><path d="M872.4,230.3 L873.9,234.7 L872.4,239.1 L870.9,234.7 Z" fill="#0000ff"/><line x1="872.4" y1="231.3" x2="872.4" y2="238.1" stroke="#0000ff" stroke-width="2.2"/><path d="M872.4,410.8 L873.9,415.1 L872.4,419.5 L870.9,415.1 Z" fill="#0000ff"/><line x1="872.4" y1="411.8" x2="872.4" y2="418.5" stroke="#0000ff" stroke-width="2.2"/><line x1="843.5" y1="300.4" x2="843.5" y2="391.2" stroke="#5a5aff" stroke-width="1.8"/><path d="M843.5,303.3 L845.0,307.4 L843.5,311.5 L842.0,307.4 Z" fill="#0000ff"/><line x1="843.5" y1="304.3" x2="843.5" y2="310.5" stroke="#0000ff" stroke-width="2.2"/><path d="M843.5,339.5 L845.0,344.0 L843.5,348.5 L842.0,344.0 Z" fill="#0000ff"/><line x1="843.5" y1="340.5" x2="843.5" y2="347.5" stroke="#0000ff" stroke-width="2.2"/><path d="M843.5,356.0 L845.0,359.2 L843.5,362.5 L842.0,359.2 Z" fill="#0000ff"/><line x1="843.5" y1="357.0" x2="843.5" y2="361.5" stroke="#0000ff" stroke-width="2.2"/><path d="M843.5,379.5 L845.0,384.3 L843.5,389.1 L842.0,384.3 Z" fill="#0000ff"/><line x1="843.5" y1="380.5" x2="843.5" y2="388.1" stroke="#0000ff" stroke-width="2.2"/><line x1="822.9" y1="370.4" x2="822.9" y2="440.9" stroke="#7070ff" stroke-width="1.8"/><path d="M822.9,379.5 L824.5,384.3 L822.9,389.1 L821.3,384.3 Z" fill="#0000ff"/><line x1="822.9" y1="380.5" x2="822.9" y2="388.1" stroke="#0000ff" stroke-width="2.2"/><path d="M822.9,424.1 L824.5,428.5 L822.9,432.9 L821.3,428.5 Z" fill="#0000ff"/><line x1="822.9" y1="425.1" x2="822.9" y2="431.9" stroke="#0000ff" stroke-width="2.2"/><path d="M0.3,0 V10 M9.7,0 V10 M0.3,5 H9.7" transform="matrix(0,-0.920,1.000,0,849.40,254.40)" fill="none" stroke="#2a2aff" stroke-width="1.20" vector-effect="non-scaling-stroke" stroke-linejoin="round"/><path d="M7.2,10 V0 L0,7 H10" transform="matrix(0,-0.920,1.000,0,849.40,243.80)" fill="none" stroke="#2a2aff" stroke-width="1.20" vector-effect="non-scaling-stroke" stroke-linejoin="round"/><path d="M0.3,0 V10 M9.7,0 V10 M0.3,5 H9.7" transform="translate(869.10,320.40) scale(0.740,1.200)" fill="none" stroke="#2a2aff" stroke-width="1.20" vector-effect="non-scaling-stroke" stroke-linejoin="round"/><path d="M0.3,0 V10 M9.7,0 V10 M0.3,5 H9.7" transform="matrix(0,-0.920,0.990,0,830.00,336.10)" fill="none" stroke="#2a2aff" stroke-width="1.20" vector-effect="non-scaling-stroke" stroke-linejoin="round"/><path d="M0.6,2.6 C0.6,1 2.3,0 5,0 C7.6,0 9.4,1 9.4,2.8 C9.4,4.6 7.2,5.6 4.5,7 C2.2,8.2 0.5,9 0.5,10 H9.6" transform="matrix(0,-0.920,0.990,0,830.00,325.30)" fill="none" stroke="#2a2aff" stroke-width="1.20" vector-effect="non-scaling-stroke" stroke-linejoin="round"/><path d="M0.3,0 V10 M9.7,0 V10 M0.3,5 H9.7" transform="matrix(0,-0.840,0.980,0,830.00,380.70)" fill="none" stroke="#2a2aff" stroke-width="1.20" vector-effect="non-scaling-stroke" stroke-linejoin="round"/><path d="M2.5,2.2 L5.2,0 V10" transform="matrix(0,-0.840,0.980,0,830.00,371.10)" fill="none" stroke="#2a2aff" stroke-width="1.20" vector-effect="non-scaling-stroke" stroke-linejoin="round"/><path d="M0.3,0 V10 M9.7,0 V10 M0.3,5 H9.7" transform="matrix(0,-0.920,1.000,0,808.00,417.80)" fill="none" stroke="#2a2aff" stroke-width="1.20" vector-effect="non-scaling-stroke" stroke-linejoin="round"/><path d="M5,0 C7.6,0 9.3,2 9.3,5 C9.3,8 7.6,10 5,10 C2.4,10 0.7,8 0.7,5 C0.7,2 2.4,0 5,0 Z" transform="matrix(0,-0.920,1.000,0,808.00,407.20)" fill="none" stroke="#2a2aff" stroke-width="1.20" vector-effect="non-scaling-stroke" stroke-linejoin="round"/></svg>
<div class="panel" style="left:576px;top:510px;width:372px;height:246px"></div>
<div class="btn" style="left:602px;top:538px;width:66px;height:33px;line-height:30px">Preview</div>
<div class="btn" style="left:706px;top:538px;width:72px;height:33px;line-height:30px">run [F9]</div>
<div class="btn" style="left:830px;top:538px;width:84px;height:33px;line-height:30px">H2 run</div>
<div class="a" style="left:602px;top:608px;width:65px;height:33px;border:1px solid #000;background:linear-gradient(to bottom,#dcdcdc 0,#dcdcdc 5px,#ece9d8 5px,#ece9d8 26px,#dcdcdc 26px);text-align:center;line-height:29px;font-family:'Liberation Serif',serif;font-size:13px;letter-spacing:1.1px;padding-left:1px;text-rendering:geometricPrecision;color:#111">Pause</div>
<div class="btn" style="left:706px;top:608px;width:74px;height:33px;line-height:30px">stop [F4]</div>
<div class="btn" style="left:830px;top:606px;width:86px;height:35px;line-height:32px">back to zero</div>
<div class="btn" style="left:692px;top:670px;width:116px;height:30px;line-height:27px">count reset</div>
<div class="btn" style="left:692px;top:710px;width:116px;height:30px;line-height:27px">Click lock</div>
<div class="sunk" style="left:598px;top:672px;width:74px;height:25px"><span class="b" style="left:3px;top:3px">1</span></div>
<div class="sunk" style="left:598px;top:712px;width:74px;height:25px"></div>
<div class="t" style="left:842px;top:679px">working time</div>
<div class="t b" style="left:842px;top:713px;font-size:14px">00:00:02</div>
<div class="panel" style="left:980px;top:124px;width:266px;height:304px"></div>
<svg style="left:0;top:0" width="1280" height="440" viewBox="0 0 1280 440"><defs><radialGradient id="gb" cx="50%" cy="38%" r="62%"><stop offset="0" stop-color="#c9c9c9"/><stop offset="0.6" stop-color="#b5b5b5"/><stop offset="0.88" stop-color="#a3a3a3"/><stop offset="1" stop-color="#8f8f8f"/></radialGradient></defs><rect x="1054" y="152" width="2" height="39" fill="#fff" shape-rendering="crispEdges"/><rect x="1054" y="152" width="38" height="2" fill="#fff" shape-rendering="crispEdges"/><circle cx="1074.5" cy="172.3" r="16.6" fill="url(#gb)"/><circle cx="1074.5" cy="172.3" r="15.6" fill="none" stroke="#9c9c9c" stroke-width="1.2" opacity="0.8"/><g transform="translate(1074.5,172.3) rotate(0)"><path d="M0,-8.5 V9.6" stroke="#f7f7f7" stroke-width="4.2" fill="none"/><path d="M-8.6,0.8 L0,-9 L8.6,0.8" stroke="#f7f7f7" stroke-width="4.2" fill="none" stroke-linejoin="miter"/></g><rect x="1002" y="200" width="2" height="38" fill="#fff" shape-rendering="crispEdges"/><rect x="1002" y="236" width="39" height="2" fill="#fff" shape-rendering="crispEdges"/><circle cx="1022.3" cy="217.5" r="16.6" fill="url(#gb)"/><circle cx="1022.3" cy="217.5" r="15.6" fill="none" stroke="#9c9c9c" stroke-width="1.2" opacity="0.8"/><g transform="translate(1022.3,217.5) rotate(270)"><path d="M0,-8.5 V9.6" stroke="#f7f7f7" stroke-width="4.2" fill="none"/><path d="M-8.6,0.8 L0,-9 L8.6,0.8" stroke="#f7f7f7" stroke-width="4.2" fill="none" stroke-linejoin="miter"/></g><rect x="1133" y="200" width="2" height="38" fill="#fff" shape-rendering="crispEdges"/><rect x="1096" y="236" width="39" height="2" fill="#fff" shape-rendering="crispEdges"/><circle cx="1114.5" cy="217.5" r="16.6" fill="url(#gb)"/><circle cx="1114.5" cy="217.5" r="15.6" fill="none" stroke="#9c9c9c" stroke-width="1.2" opacity="0.8"/><g transform="translate(1114.5,217.5) rotate(90)"><path d="M0,-8.5 V9.6" stroke="#f7f7f7" stroke-width="4.2" fill="none"/><path d="M-8.6,0.8 L0,-9 L8.6,0.8" stroke="#f7f7f7" stroke-width="4.2" fill="none" stroke-linejoin="miter"/></g><rect x="1054" y="244" width="2" height="39" fill="#fff" shape-rendering="crispEdges"/><rect x="1054" y="281" width="38" height="2" fill="#fff" shape-rendering="crispEdges"/><circle cx="1074.5" cy="262.6" r="16.6" fill="url(#gb)"/><circle cx="1074.5" cy="262.6" r="15.6" fill="none" stroke="#9c9c9c" stroke-width="1.2" opacity="0.8"/><g transform="translate(1074.5,262.6) rotate(180)"><path d="M0,-8.5 V9.6" stroke="#f7f7f7" stroke-width="4.2" fill="none"/><path d="M-8.6,0.8 L0,-9 L8.6,0.8" stroke="#f7f7f7" stroke-width="4.2" fill="none" stroke-linejoin="miter"/></g><rect x="1176" y="152" width="2" height="39" fill="#fff" shape-rendering="crispEdges"/><rect x="1176" y="152" width="38" height="2" fill="#fff" shape-rendering="crispEdges"/><circle cx="1196.0" cy="172.3" r="16.6" fill="url(#gb)"/><circle cx="1196.0" cy="172.3" r="15.6" fill="none" stroke="#9c9c9c" stroke-width="1.2" opacity="0.8"/><g transform="translate(1196.0,172.3) rotate(0)"><path d="M0,-8.5 V9.6" stroke="#f7f7f7" stroke-width="4.2" fill="none"/><path d="M-8.6,0.8 L0,-9 L8.6,0.8" stroke="#f7f7f7" stroke-width="4.2" fill="none" stroke-linejoin="miter"/></g><rect x="1176" y="244" width="2" height="39" fill="#fff" shape-rendering="crispEdges"/><rect x="1176" y="281" width="38" height="2" fill="#fff" shape-rendering="crispEdges"/><circle cx="1196.0" cy="262.6" r="16.6" fill="url(#gb)"/><circle cx="1196.0" cy="262.6" r="15.6" fill="none" stroke="#9c9c9c" stroke-width="1.2" opacity="0.8"/><g transform="translate(1196.0,262.6) rotate(180)"><path d="M0,-8.5 V9.6" stroke="#f7f7f7" stroke-width="4.2" fill="none"/><path d="M-8.6,0.8 L0,-9 L8.6,0.8" stroke="#f7f7f7" stroke-width="4.2" fill="none" stroke-linejoin="miter"/></g></svg>
<div class="t b" style="left:1063px;top:211px;font-size:12.5px;word-spacing:0.4px">X Y</div>
<div class="t b" style="left:1192px;top:207px;font-size:12.5px">Z</div>
<div class="t" style="left:1004px;top:323px">step</div>
<div class="sunk" style="left:1046px;top:320px;width:41px;height:20px"><span style="top:3px">0.2</span></div>
<div class="t" style="left:1100px;top:325px">mm</div>
<div class="sunk" style="left:1158px;top:322px;width:41px;height:20px"><span style="top:3px">0.05</span></div>
<div class="t" style="left:1208px;top:325px">mm</div>
<div class="t" style="left:1002px;top:368px">speed</div>
<div class="sunk" style="left:1046px;top:364px;width:40px;height:21px"><span style="top:3px">8</span></div>
<div class="t" style="left:1098px;top:368px">mm/s</div>
<div class="panel" style="left:978px;top:456px;width:268px;height:228px"></div>
<svg style="left:0;top:0" width="1280" height="700" viewBox="0 0 1280 700"><defs><linearGradient id="ring" x1="0.15" y1="0.1" x2="0.85" y2="0.9"><stop offset="0" stop-color="#4a3a4c"/><stop offset="0.5" stop-color="#9c86a0"/><stop offset="1" stop-color="#f4d8f0"/></linearGradient><linearGradient id="ball" x1="0.2" y1="0.1" x2="0.85" y2="0.9"><stop offset="0" stop-color="#9cc6ff"/><stop offset="0.35" stop-color="#4a96ff"/><stop offset="0.7" stop-color="#0a55ee"/><stop offset="1" stop-color="#0030b0"/></linearGradient></defs><rect x="1022.5" y="472.5" width="54" height="54" fill="none" stroke="#fff"/><path d="M1022.5,526.5 H1076.5 V472.5" fill="none" stroke="#c2bea9"/><rect x="1028.5" y="478.5" width="42" height="42" fill="#fff" stroke="#000" rx="1.5" stroke-width="1.2"/><path d="M1030,519.2 H1068.7 V480.5" fill="none" stroke="#b4b09c" stroke-width="1.6"/><circle cx="1048.2" cy="497.7" r="16" fill="url(#ring)"/><circle cx="1048.4" cy="497.9" r="11.8" fill="url(#ball)"/><rect x="1022.5" y="540.5" width="54" height="54" fill="none" stroke="#fff"/><path d="M1022.5,594.5 H1076.5 V540.5" fill="none" stroke="#c2bea9"/><rect x="1028.5" y="546.5" width="42" height="42" fill="#fff" stroke="#000" rx="1.5" stroke-width="1.2"/><path d="M1030,587.2 H1068.7 V548.5" fill="none" stroke="#b4b09c" stroke-width="1.6"/><circle cx="1048.2" cy="565.7" r="16" fill="url(#ring)"/><circle cx="1048.4" cy="565.9" r="11.8" fill="url(#ball)"/><rect x="1022.5" y="608.5" width="54" height="54" fill="none" stroke="#fff"/><path d="M1022.5,662.5 H1076.5 V608.5" fill="none" stroke="#c2bea9"/><rect x="1028.5" y="614.5" width="42" height="42" fill="#fff" stroke="#000" rx="1.5" stroke-width="1.2"/><path d="M1030,655.2 H1068.7 V616.5" fill="none" stroke="#b4b09c" stroke-width="1.6"/><circle cx="1048.2" cy="633.7" r="16" fill="url(#ring)"/><circle cx="1048.4" cy="633.9" r="11.8" fill="url(#ball)"/></svg>
<div class="t" style="left:1098px;top:493px;font-size:14.3px;line-height:18px;height:18px;letter-spacing:0">laser off [F5]</div>
<div class="t" style="left:1098px;top:557px;font-size:14.3px;line-height:18px;height:18px;letter-spacing:0">shutter off [F6]</div>
<div class="t" style="left:1098px;top:625px;font-size:14.3px;line-height:18px;height:18px;letter-spacing:0">rotate stop [F8]</div>
<div class="panel" style="left:978px;top:706px;width:266px;height:280px"></div>
<div class="t" style="left:998px;top:727px">Frequency</div>
<div class="sunk" style="left:1116px;top:724px;width:50px;height:22px"><span style="top:3px">2000</span></div>
<div class="t" style="left:1194px;top:727px">Hz</div>
<div class="t" style="left:998px;top:757px">pulse width</div>
<div class="sunk" style="left:1116px;top:754px;width:50px;height:22px"><span style="top:3px">10</span></div>
<div class="t" style="left:1194px;top:757px">us</div>
<div class="t" style="left:998px;top:787px">rotate delay</div>
<div class="sunk" style="left:1116px;top:784px;width:50px;height:22px"><span style="top:3px">1000</span></div>
<div class="t" style="left:1194px;top:789px">ms</div>
<div class="t" style="left:998px;top:819px">shutter delay</div>
<div class="sunk" style="left:1116px;top:814px;width:50px;height:22px"><span style="top:3px">1000</span></div>
<div class="t" style="left:1194px;top:821px">ms</div>
<div class="t" style="left:998px;top:853px">speed on laser off</div>
<div class="sunk" style="left:1116px;top:844px;width:50px;height:23px"><span style="top:3px">1</span></div>
<div class="t" style="left:1194px;top:851px">mm/s</div>
<div class="t" style="left:998px;top:887px">Preview speed</div>
<div class="sunk" style="left:1116px;top:878px;width:50px;height:23px"><span style="top:3px">500</span></div>
<div class="t" style="left:1194px;top:883px">mm/s</div>
<div class="t" style="left:998px;top:921px">Z speed</div>
<div class="sunk" style="left:1116px;top:912px;width:50px;height:23px"><span style="top:3px">.5</span></div>
<div class="t" style="left:1194px;top:917px">mm/s</div>
<div class="t b" style="left:998px;top:953px">H0</div>
<div class="sunk" style="left:1116px;top:945px;width:50px;height:22px;background:#80ffff"><span style="top:2px">20</span></div>
<div class="t b" style="left:1194px;top:951px;transform:scale(0.84,1.08);transform-origin:0 80%">%</div>
<div class="panel" style="left:12px;top:766px;width:934px;height:219px"></div>
<div class="t b" style="left:36px;top:786px">D</div>
<div class="sunk" style="left:58px;top:785px;width:46px;height:24px"><span class="k">.2</span></div>
<div class="t b" style="left:109px;top:786px">mm</div>
<div class="t b" style="left:35px;top:825px">A1</div>
<div class="sunk" style="left:58px;top:824px;width:46px;height:24px"><span class="k">15</span></div>
<div class="t b" style="left:109px;top:825px">deg</div>
<div class="t b" style="left:32px;top:867px">A2</div>
<div class="sunk" style="left:58px;top:864px;width:46px;height:24px"><span class="k">20</span></div>
<div class="t b" style="left:109px;top:866px">deg</div>
<div class="t b" style="left:35px;top:905px">A3</div>
<div class="sunk" style="left:58px;top:904px;width:46px;height:24px"><span class="k">30</span></div>
<div class="t b" style="left:110px;top:904px">deg</div>
<div class="t b" style="left:35px;top:945px">A4</div>
<div class="sunk" style="left:58px;top:944px;width:46px;height:24px"><span class="k">30</span></div>
<div class="t b" style="left:110px;top:944px">deg</div>
<div class="t b" style="left:232px;top:786px">H</div>
<div class="sunk" style="left:256px;top:785px;width:46px;height:24px"><span class="k">1.5</span></div>
<div class="t b" style="left:307px;top:786px">mm</div>
<div class="t b" style="left:232px;top:828px">H1</div>
<div class="sunk" style="left:256px;top:824px;width:46px;height:24px"><span class="k">30</span></div>
<div class="t b" style="left:307px;top:826px;transform:scale(0.84,1.08);transform-origin:0 80%">%</div>
<div class="t b" style="left:232px;top:870px">H2</div>
<div class="sunk" style="left:256px;top:864px;width:46px;height:24px"><span class="k">20</span></div>
<div class="t b" style="left:307px;top:867px;transform:scale(0.84,1.08);transform-origin:0 80%">%</div>
<div class="t b" style="left:232px;top:907px">H3</div>
<div class="sunk" style="left:256px;top:904px;width:46px;height:24px"><span class="k">10</span></div>
<div class="t b" style="left:308px;top:905px;transform:scale(0.84,1.08);transform-origin:0 80%">%</div>
<div class="t b" style="left:232px;top:947px">H4</div>
<div class="sunk" style="left:256px;top:944px;width:46px;height:24px"><span class="k">20</span></div>
<div class="t b" style="left:308px;top:945px;transform:scale(0.84,1.08);transform-origin:0 80%">%</div>
<div class="t b" style="left:419px;top:788px;letter-spacing:-0.5px">ST0</div>
<div class="sunk" style="left:450px;top:787px;width:46px;height:24px"><span class="k">.02</span></div>
<div class="t b" style="left:504px;top:788px">mm</div>
<div class="t b" style="left:419px;top:829px;letter-spacing:-0.5px">ST1</div>
<div class="sunk" style="left:450px;top:826px;width:46px;height:24px"><span class="k">.03</span></div>
<div class="t b" style="left:504px;top:828px">mm</div>
<div class="t b" style="left:419px;top:871px;letter-spacing:-0.5px">ST2</div>
<div class="sunk" style="left:450px;top:866px;width:46px;height:24px"><span class="k">.03</span></div>
<div class="t b" style="left:504px;top:869px">mm</div>
<div class="t b" style="left:419px;top:910px;letter-spacing:-0.5px">ST3</div>
<div class="sunk" style="left:450px;top:906px;width:46px;height:24px"><span class="k">.03</span></div>
<div class="t b" style="left:504px;top:907px">mm</div>
<div class="t b" style="left:419px;top:948px;letter-spacing:-0.5px">ST4</div>
<div class="sunk" style="left:450px;top:946px;width:46px;height:24px"><span class="k">.03</span></div>
<div class="t b" style="left:504px;top:947px">mm</div>
<div class="t b" style="left:607px;top:788px">speed0</div>
<div class="sunk" style="left:658px;top:787px;width:46px;height:24px"><span class="k">.25</span></div>
<div class="t b" style="left:708px;top:788px">mm/s</div>
<div class="t b" style="left:607px;top:829px">speed1</div>
<div class="sunk" style="left:658px;top:826px;width:46px;height:24px"><span class="k">.25</span></div>
<div class="t b" style="left:708px;top:827px">mm/s</div>
<div class="t b" style="left:607px;top:869px">speed2</div>
<div class="sunk" style="left:658px;top:866px;width:46px;height:24px"><span class="k">.25</span></div>
<div class="t b" style="left:708px;top:869px">mm/s</div>
<div class="t b" style="left:607px;top:908px">speed3</div>
<div class="sunk" style="left:658px;top:906px;width:46px;height:24px"><span class="k">.25</span></div>
<div class="t b" style="left:709px;top:907px">mm/s</div>
<div class="t b" style="left:607px;top:947px">speed4</div>
<div class="sunk" style="left:658px;top:946px;width:46px;height:24px"><span class="k">.25</span></div>
<div class="t b" style="left:709px;top:947px">mm/s</div>
<div class="t b" style="left:783px;top:786px;letter-spacing:-0.12px">Frequency0</div>
<div class="sunk" style="left:860px;top:785px;width:46px;height:24px"><span class="k">3000</span></div>
<div class="t b" style="left:912px;top:786px">Hz</div>
<div class="t b" style="left:783px;top:825px;letter-spacing:-0.12px">Frequency1</div>
<div class="sunk" style="left:860px;top:824px;width:46px;height:24px"><span class="k">2000</span></div>
<div class="t b" style="left:912px;top:825px">Hz</div>
<div class="t b" style="left:783px;top:867px;letter-spacing:-0.12px">Frequency2</div>
<div class="sunk" style="left:860px;top:864px;width:46px;height:24px"><span class="k">2000</span></div>
<div class="t b" style="left:912px;top:866px">Hz</div>
<div class="t b" style="left:784px;top:909px;letter-spacing:-0.12px">Frequency3</div>
<div class="sunk" style="left:860px;top:904px;width:46px;height:24px"><span class="k">2000</span></div>
<div class="t b" style="left:912px;top:907px">Hz</div>
<div class="t b" style="left:784px;top:945px;letter-spacing:-0.12px">Frequency4</div>
<div class="sunk" style="left:860px;top:944px;width:46px;height:24px"><span class="k">2000</span></div>
<div class="t b" style="left:912px;top:945px">Hz</div>
<div class="a" style="left:0;top:994px;width:1280px;height:30px;background:linear-gradient(to bottom,#1f4fc0 0,#3a80ea 1.5px,#3672e2 3px,#2a60d8 6px,#275bd2 12px,#2659d0 22px,#2353c6 26px,#1c43a8 29px,#183a96 30px)"></div>
<div class="a" style="left:1185px;top:994px;width:95px;height:30px;background:linear-gradient(to bottom,#1470c8 0,#22a4f4 2px,#199cf0 4px,#1290e8 10px,#1290e8 22px,#118ae0 26px,#0e70c0 30px);border-left:1px solid #0c4a9a;box-shadow:inset 1px 0 0 #3cb4f8"></div>
<svg style="left:0;top:0" width="1280" height="1024" viewBox="0 0 1280 1024"><defs><linearGradient id="sg" x1="0" y1="0" x2="0" y2="1"><stop offset="0" stop-color="#2e7a2e"/><stop offset="0.07" stop-color="#5aa85a"/><stop offset="0.16" stop-color="#6cb46c"/><stop offset="0.3" stop-color="#3f9a3f"/><stop offset="0.6" stop-color="#3c9c3c"/><stop offset="0.82" stop-color="#46aa46"/><stop offset="0.93" stop-color="#3a8e3a"/><stop offset="1" stop-color="#286e28"/></linearGradient><linearGradient id="sgh" x1="0" y1="0" x2="1" y2="0"><stop offset="0" stop-color="#226422" stop-opacity="0.7"/><stop offset="0.04" stop-color="#226422" stop-opacity="0"/><stop offset="0.9" stop-color="#226422" stop-opacity="0"/><stop offset="1" stop-color="#1e5c1e" stop-opacity="0.75"/></linearGradient></defs><path d="M0,994 H88 C94,996 97,1002 97,1008 C97,1014 94,1020 89,1022 H0 Z" fill="url(#sg)"/><path d="M0,994 H88 C94,996 97,1002 97,1008 C97,1014 94,1020 89,1022 H0 Z" fill="url(#sgh)"/><path d="M13,1000.2 C15.5,998.6 18.5,998.8 21.6,1000.4 L20,1006.6 C17,1005.2 14.4,1005.2 11.6,1006.6 Z" fill="#ee5a1e"/><path d="M22.8,1001 C25,1002.2 27,1002.2 29.4,1001 L27.8,1007.4 C25.4,1008.6 23.4,1008.4 21.2,1007.2 Z" fill="#7ec81e"/><path d="M11.2,1007.8 C13.8,1006.4 16.6,1006.4 19.6,1007.8 L18,1014 C15,1012.8 12.4,1012.8 9.8,1014 Z" fill="#4f78e8"/><path d="M20.8,1008.4 C23,1009.6 25.2,1009.6 27.4,1008.6 L25.8,1014.8 C23.6,1016 21.4,1015.8 19.2,1014.6 Z" fill="#fcd116"/><path d="M41.5,1000.6 H57 M38.4,1007 H55.8 M46.6,1000.8 C45.8,1004.5 44.6,1008.5 42.4,1011.6 C40.8,1013.8 38.6,1015.2 36,1016 M52.2,1000.8 L48.4,1016 M63.6,999.6 C61.8,1002.8 59.8,1005.8 57.8,1008.4 C59.4,1009.8 60.8,1011.2 61.8,1012.8 M57,1005.4 L64.6,1004.4 M63.2,1004.6 C62,1008.6 59.4,1012.8 54.8,1015.8 M71.4,999.6 C70,1002 68.4,1004.2 66.4,1006.2 L74.4,1005.4 M72.6,1002.2 C73.6,1003.4 74.6,1004.6 75.2,1005.8 M66.4,1008.8 H73.6 L71.8,1015.4 H64.6 Z" transform="translate(1,1)" fill="none" stroke="#1c5a1c" stroke-width="1.5" stroke-linecap="round" stroke-linejoin="round" opacity="0.85"/><path d="M41.5,1000.6 H57 M38.4,1007 H55.8 M46.6,1000.8 C45.8,1004.5 44.6,1008.5 42.4,1011.6 C40.8,1013.8 38.6,1015.2 36,1016 M52.2,1000.8 L48.4,1016 M63.6,999.6 C61.8,1002.8 59.8,1005.8 57.8,1008.4 C59.4,1009.8 60.8,1011.2 61.8,1012.8 M57,1005.4 L64.6,1004.4 M63.2,1004.6 C62,1008.6 59.4,1012.8 54.8,1015.8 M71.4,999.6 C70,1002 68.4,1004.2 66.4,1006.2 L74.4,1005.4 M72.6,1002.2 C73.6,1003.4 74.6,1004.6 75.2,1005.8 M66.4,1008.8 H73.6 L71.8,1015.4 H64.6 Z" fill="none" stroke="#fff" stroke-width="1.3" stroke-linecap="round" stroke-linejoin="round"/><rect x="100.5" y="997.5" width="41" height="23" rx="2" fill="#2c5fd6" stroke="#5c86e4"/><path transform="translate(116.6,1005.6) rotate(0)" d="M2.77,-2.6 A3.8,3.8 0 1 0 2.77,2.6 A2.6,2.6 0 0 1 2.77,-2.6 Z" fill="#8fcc00"/><path transform="translate(124.4,1004.8) rotate(90)" d="M2.77,-2.6 A3.8,3.8 0 1 0 2.77,2.6 A2.6,2.6 0 0 1 2.77,-2.6 Z" fill="#8ecbff"/><path transform="translate(117.6,1012.8) rotate(-90)" d="M2.77,-2.6 A3.8,3.8 0 1 0 2.77,2.6 A2.6,2.6 0 0 1 2.77,-2.6 Z" fill="#f2b600"/><path transform="translate(125.0,1013.0) rotate(180)" d="M2.77,-2.6 A3.8,3.8 0 1 0 2.77,2.6 A2.6,2.6 0 0 1 2.77,-2.6 Z" fill="#ee6450"/><circle cx="133.6" cy="1003.4" r="5.6" fill="#fff"/><circle cx="133.6" cy="1003.4" r="4" fill="#f07000"/><ellipse cx="156.4" cy="1008.8" rx="9" ry="4.6" transform="rotate(-38 156.4 1008.8)" fill="none" stroke="#e8b62e" stroke-width="1.5"/><path d="M151,1010 H163.4 C163.6,1005 160.6,1002.4 156.8,1002.4 C152.8,1002.4 150,1005.4 150,1009.2 C150,1013.4 153,1016 156.8,1016 C159.6,1016 161.8,1014.6 162.8,1012.4 H159.6 C159,1013.2 158,1013.6 156.8,1013.6 C154.8,1013.6 153.6,1012.2 153.4,1010 Z M153.5,1007.6 C153.9,1005.9 155.1,1004.9 156.8,1004.9 C158.5,1004.9 159.7,1005.9 160,1007.6 Z" fill="#2aa2f4" fill-rule="evenodd"/><path d="M148.6,1015 C147.4,1013.2 148.4,1010 150.8,1007" fill="none" stroke="#e8b62e" stroke-width="1.5"/><path d="M172.6,1002.6 L181.4,1000.8 L184,1003.6 L183.4,1015 L174.6,1016.6 L171.6,1013.6 Z" fill="#2a6ee0"/><path d="M173,1004.2 C176,1001.8 181,1002 182.8,1004.6 L182.2,1013.2 C179.6,1015.8 175,1015.8 172.4,1013.2 Z" fill="#fbf3d4"/><path d="M177.6,1005 H181 V1012.6 H176.4 V1010.8 H179 V1006.8 H177.6 Z" fill="#3c78e6"/><path d="M175.6,1009.4 L178.4,1008 V1010.4 Z" fill="#222"/><path d="M184.6,1004.2 L185.2,1005.8 L186.8,1006.2 L185.2,1006.8 L184.6,1008.4 L184,1006.8 L182.4,1006.2 L184,1005.8 Z" fill="#f24a1e"/><rect x="197.5" y="998" width="159" height="23" rx="2.5" fill="#1e50ba" stroke="#18409c"/><path d="M199,1020 H355.5" stroke="#2a5ccc" stroke-width="1"/><rect x="358" y="998" width="158" height="22.6" rx="2.5" fill="#3c82ee"/><path d="M359.5,998.6 H514.5" stroke="#5a9af6" stroke-width="1.2"/><path d="M359.5,1020.2 H514.5" stroke="#2c66d0" stroke-width="1"/><path d="M369.6,1008 H380 L378.4,1016 C376.4,1017 373.2,1017 371.2,1016 Z" fill="#bfe4dc" stroke="#7aa8a0" stroke-width="0.6"/><path d="M370.4,1001.6 L373.4,1013" stroke="#d8462a" stroke-width="1.6"/><path d="M374.6,1002.6 L374.4,1013" stroke="#e8c21e" stroke-width="1.6"/><path d="M379.6,1002.4 L376,1013" stroke="#e8602a" stroke-width="1.6"/><path d="M377.6,1003.2 L375.4,1012" stroke="#4a9a3a" stroke-width="1.2"/><circle cx="370.2" cy="1001.6" r="1.3" fill="#c8401e"/><path d="M435,1003.5 H447 M435.5,1006 V1013.5 H446.5 V1006 M437.5,1005.5 H444.5 V1011.5 H437.5 Z M437.5,1008.5 H444.5 M441.5,1005.5 V1011.5 M448.5,1003.5 H458.5 V1013.5 H448.5 Z" fill="none" stroke="#fff" stroke-width="1" shape-rendering="crispEdges"/><path d="M453,1004.6 L450.8,1007.4 M452.2,1005.6 H456 L451,1010 M452.6,1007.2 L456.6,1010 M452.8,1010.4 L454.4,1011 M451.8,1011.8 L454.8,1012.6" fill="none" stroke="#fff" stroke-width="0.95"/><rect x="423" y="1009" width="5" height="1" fill="#fff"/><rect x="1150.5" y="1007.5" width="15" height="8" rx="1.8" fill="#fff" stroke="#000" stroke-width="1.2"/><path d="M1152.6,1010.5 H1164 M1152.6,1012.5 H1164" stroke="#000" stroke-width="1.2" stroke-dasharray="1.1 0.8"/><path d="M1154,1002.4 L1154.6,1004.2 L1156,1005 L1157.2,1004.2 L1158.6,1005 L1159.8,1004.2 L1161.2,1005 L1162.4,1004.4 L1163.2,1006.6" fill="none" stroke="#000" stroke-width="0.9"/><defs><linearGradient id="chg" x1="0.15" y1="0.1" x2="0.85" y2="0.9"><stop offset="0" stop-color="#8ccaff"/><stop offset="0.5" stop-color="#2f8cf0"/><stop offset="1" stop-color="#1462d8"/></linearGradient></defs><circle cx="1185.6" cy="1009.5" r="8.4" fill="url(#chg)" stroke="#9cc4f4" stroke-width="0.8"/><circle cx="1185.6" cy="1009.5" r="9.2" fill="none" stroke="#1c3c90" stroke-width="0.8"/><path d="M1188.2,1005.4 L1183.6,1009.6 L1188.2,1013.8" fill="none" stroke="#fff" stroke-width="2"/><rect x="1202.5" y="1002" width="6.5" height="6" fill="#3a3a78" stroke="#9a9ac8" stroke-width="0.8"/><rect x="1197" y="1005.5" width="7" height="6.5" fill="#3a3a78" stroke="#b0b0d8" stroke-width="0.8"/><rect x="1196.6" y="1012.6" width="8" height="2.6" fill="#c8c8e0"/><rect x="1204" y="1009" width="5" height="1.6" fill="#a8a8c8"/><path d="M1204,1010.4 L1211.6,1016.6 M1211.6,1010.4 L1204,1016.6" stroke="#e83232" stroke-width="1.8"/><defs><radialGradient id="yg" cx="35%" cy="30%" r="75%"><stop offset="0" stop-color="#ffffb0"/><stop offset="0.35" stop-color="#fff01e"/><stop offset="1" stop-color="#f0c800"/></radialGradient></defs><circle cx="1222" cy="1008.9" r="8" fill="#2e9620"/><ellipse cx="1222" cy="1008.9" rx="8.3" ry="5.3" transform="rotate(40 1222 1008.9)" fill="url(#yg)"/><path d="M1217.8,1008.9 H1226.2 M1222,1004.7 V1013.1" stroke="#0c5a0c" stroke-width="2.2"/></svg>
<svg style="left:208px;top:1002px" width="16" height="16" viewBox="0 0 16 16"><defs><linearGradient id="gj" x1="0" y1="0" x2="0" y2="1"><stop offset="0" stop-color="#f2ede4"/><stop offset="0.28" stop-color="#cfcac2"/><stop offset="0.55" stop-color="#8f8d8a"/><stop offset="0.8" stop-color="#a9a7a3"/><stop offset="1" stop-color="#8a857d"/></linearGradient><linearGradient id="gjb" x1="0" y1="0" x2="0" y2="1"><stop offset="0" stop-color="#2e86c4"/><stop offset="0.5" stop-color="#1a5aa8"/><stop offset="1" stop-color="#002a70"/></linearGradient></defs><rect width="16" height="16" fill="url(#gjb)"/><circle cx="8" cy="8" r="7.9" fill="url(#gj)"/><ellipse cx="6.1" cy="6.9" rx="0.9" ry="1.6" fill="#33241c"/><ellipse cx="9.3" cy="6.9" rx="0.9" ry="1.6" fill="#33241c"/><rect x="4.9" y="9.9" width="1.3" height="1.5" fill="#eee"/><rect x="8.9" y="9.9" width="1.3" height="1.5" fill="#eee"/><rect x="6.2" y="9.6" width="2.7" height="1" fill="#c8c8c8"/></svg>
<div class="mono" style="left:228px;top:1003px;font-size:10.6px;height:14px;line-height:14px;--cw:7.692px"><i>3</i><i class="u">K</i><i class="u">L</i><i class="u">A</i><i class="u">S</i><i class="u">E</i><i class="u">R</i><i> </i><i>(</i><i class="w">w</i><i class="w">w</i><i class="w">w</i><i>.</i><i>3</i><i>k</i><i>l</i><i>.</i><i>.</i><i>.</i></div>
<div class="mono" style="left:387px;top:1003px;font-size:10.6px;height:14px;line-height:14px;--cw:7.692px"><i>5</i><i>5</i><i>5</i><i>5</i><i>5</i></div>
<div class="mono" style="left:1237px;top:1002px;font-size:11px;height:14px;line-height:14px;--cw:7.436px"><i>1</i><i>5</i><i>:</i><i>3</i><i>7</i></div>
</body></html>
